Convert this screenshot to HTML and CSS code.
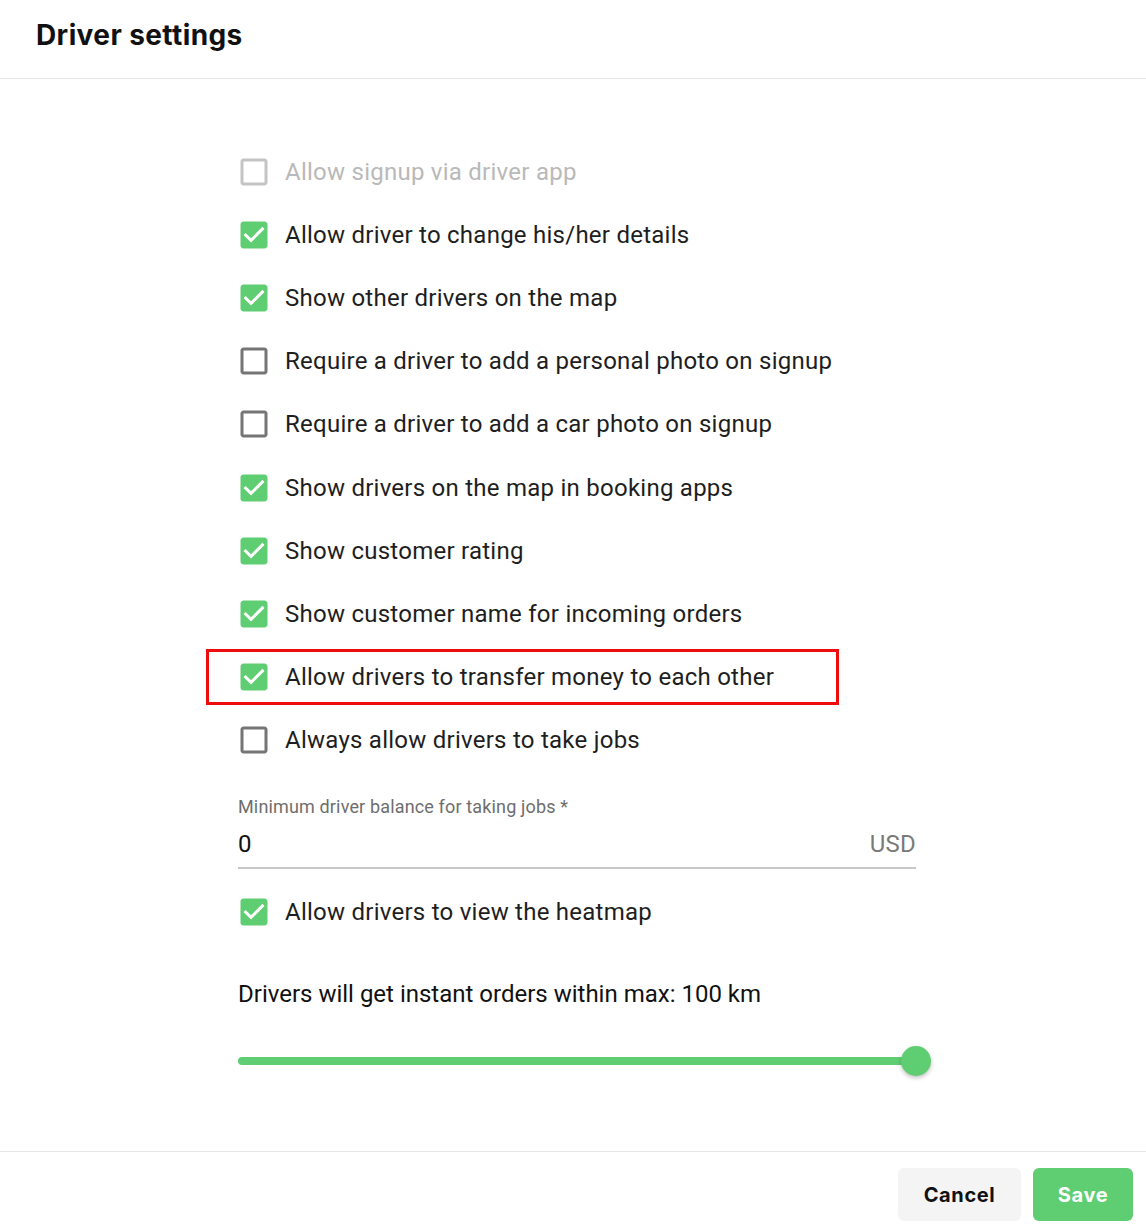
FILE: index.html
```html
<!DOCTYPE html>
<html>
<head>
<meta charset="utf-8">
<link rel="stylesheet" href="styles.css">
</head>
<body>
<div class="dialog">
  <header class="head"><h1 class="title">Driver settings</h1></header>
  <main class="body">
    <div class="col">
      <div class="row disabled"><svg class="cb" viewBox="0 0 24 24"><path d="M19 5v14H5V5h14m0-2H5c-1.1 0-2 .9-2 2v14c0 1.1.9 2 2 2h14c1.1 0 2-.9 2-2V5c0-1.1-.9-2-2-2z"/></svg><span>Allow signup via driver app</span></div>
      <div class="row"><svg class="cb on" viewBox="0 0 24 24"><path d="M19 3H5c-1.11 0-2 .9-2 2v14c0 1.1.89 2 2 2h14c1.11 0 2-.9 2-2V5c0-1.1-.89-2-2-2zm-9 14l-5-5 1.41-1.41L10 14.170l7.590-7.590L19 8l-9 9z"/></svg><span>Allow driver to change his/her details</span></div>
      <div class="row"><svg class="cb on" viewBox="0 0 24 24"><path d="M19 3H5c-1.11 0-2 .9-2 2v14c0 1.1.89 2 2 2h14c1.11 0 2-.9 2-2V5c0-1.1-.89-2-2-2zm-9 14l-5-5 1.41-1.41L10 14.17l7.59-7.59L19 8l-9 9z"/></svg><span>Show other drivers on the map</span></div>
      <div class="row"><svg class="cb" viewBox="0 0 24 24"><path d="M19 5v14H5V5h14m0-2H5c-1.1 0-2 .9-2 2v14c0 1.1.9 2 2 2h14c1.1 0 2-.9 2-2V5c0-1.1-.9-2-2-2z"/></svg><span>Require a driver to add a personal photo on signup</span></div>
      <div class="row"><svg class="cb" viewBox="0 0 24 24"><path d="M19 5v14H5V5h14m0-2H5c-1.1 0-2 .9-2 2v14c0 1.1.9 2 2 2h14c1.1 0 2-.9 2-2V5c0-1.1-.9-2-2-2z"/></svg><span>Require a driver to add a car photo on signup</span></div>
      <div class="row"><svg class="cb on" viewBox="0 0 24 24"><path d="M19 3H5c-1.11 0-2 .9-2 2v14c0 1.1.89 2 2 2h14c1.11 0 2-.9 2-2V5c0-1.1-.89-2-2-2zm-9 14l-5-5 1.41-1.41L10 14.17l7.59-7.59L19 8l-9 9z"/></svg><span>Show drivers on the map in booking apps</span></div>
      <div class="row"><svg class="cb on" viewBox="0 0 24 24"><path d="M19 3H5c-1.11 0-2 .9-2 2v14c0 1.1.89 2 2 2h14c1.11 0 2-.9 2-2V5c0-1.1-.89-2-2-2zm-9 14l-5-5 1.41-1.41L10 14.17l7.59-7.59L19 8l-9 9z"/></svg><span>Show customer rating</span></div>
      <div class="row"><svg class="cb on" viewBox="0 0 24 24"><path d="M19 3H5c-1.11 0-2 .9-2 2v14c0 1.1.89 2 2 2h14c1.11 0 2-.9 2-2V5c0-1.1-.89-2-2-2zm-9 14l-5-5 1.41-1.41L10 14.17l7.59-7.59L19 8l-9 9z"/></svg><span>Show customer name for incoming orders</span></div>
      <div class="row marked"><svg class="cb on" viewBox="0 0 24 24"><path d="M19 3H5c-1.11 0-2 .9-2 2v14c0 1.1.89 2 2 2h14c1.11 0 2-.9 2-2V5c0-1.1-.89-2-2-2zm-9 14l-5-5 1.41-1.41L10 14.17l7.59-7.59L19 8l-9 9z"/></svg><span>Allow drivers to transfer money to each other</span><div class="mark"></div></div>
      <div class="row"><svg class="cb" viewBox="0 0 24 24"><path d="M19 5v14H5V5h14m0-2H5c-1.1 0-2 .9-2 2v14c0 1.1.9 2 2 2h14c1.1 0 2-.9 2-2V5c0-1.1-.9-2-2-2z"/></svg><span>Always allow drivers to take jobs</span></div>

      <div class="field">
        <label class="flabel">Minimum driver balance for taking jobs *</label>
        <div class="finput"><span class="fval">0</span><span class="fadorn">USD</span></div>
      </div>

      <div class="row"><svg class="cb on" viewBox="0 0 24 24"><path d="M19 3H5c-1.11 0-2 .9-2 2v14c0 1.1.89 2 2 2h14c1.11 0 2-.9 2-2V5c0-1.1-.89-2-2-2zm-9 14l-5-5 1.41-1.41L10 14.17l7.59-7.59L19 8l-9 9z"/></svg><span>Allow drivers to view the heatmap</span></div>

      <div class="range">Drivers will get instant orders within max: 100 km</div>
      <div class="slider"><div class="track"></div><div class="thumb"></div></div>
    </div>
  </main>
  <footer class="foot">
    <button class="btn cancel">Cancel</button>
    <button class="btn save">Save</button>
  </footer>
</div>
</body>
</html>
```
FILE: styles.css
```css
html, body { margin: 0; padding: 0; background: #fff; }
body { font-family: Roboto, "Liberation Sans", sans-serif; color: #1a1a1a; width: 1146px; height: 1232px; overflow: hidden; }
.dialog { display: flex; flex-direction: column; height: 1232px; }
.head { height: 78px; border-bottom: 1px solid #e6e6e6; display: flex; align-items: center; padding-left: 36px; box-sizing: content-box; }
.title { margin: 0; font-family: Inter, "Noto Sans", sans-serif; font-weight: 700; font-size: 28px; color: #111; letter-spacing: 0.4px; margin-top: -8px; }
.body { flex: 1; padding-top: 61px; }
.col { width: 678px; margin-left: 238px; display: flex; flex-direction: column; }
.row { position: relative; height: 63.2px; display: flex; align-items: center; font-size: 24px; letter-spacing: 0.25px; color: #1e1e1e; }
.row span { margin-left: 13px; }
.cb { width: 36px; height: 36px; margin-left: -2px; fill: #757575; flex: none; }
.cb.on { fill: #5fce72; }
.row.disabled { color: #b9b9b9; }
.row.disabled .cb { fill: #c4c4c4; }
.mark { position: absolute; left: -32px; top: 3px; width: 633px; height: 56px; border: 3px solid #ee0c0c; box-sizing: border-box; }
.field { margin-top: 24px; margin-bottom: 12px; }
.flabel { display: block; font-size: 18px; letter-spacing: 0.15px; color: #6e6e6e; line-height: 22px; }
.finput { display: flex; justify-content: space-between; align-items: center; height: 42px; padding-bottom: 3px; box-sizing: border-box; height: 44px; margin-top: 7px; border-bottom: 2px solid #c8c8c8; font-size: 24px; letter-spacing: 0.2px; }
.fval { color: #111; }
.fadorn { color: #7a7a7a; }
.range { margin-top: 36px; font-size: 24px; letter-spacing: 0; color: #111; }
.slider { position: relative; height: 30px; margin-top: 38px; }
.track { position: absolute; left: 0; right: 0; top: 11px; height: 8px; border-radius: 4px; background: #5fce72; }
.thumb { position: absolute; right: -15px; top: 0; width: 30px; height: 30px; border-radius: 50%; background: #5fce72; box-shadow: 0 2px 4px rgba(0,0,0,0.25); }
.foot { height: 81px; border-top: 1px solid #e6e6e6; display: flex; justify-content: flex-end; align-items: flex-start; gap: 12px; padding: 16px 13px 0 0; box-sizing: border-box; }
.btn { height: 53px; border: none; border-radius: 6px; font-family: Inter, "Noto Sans", sans-serif; font-weight: 700; font-size: 20px; letter-spacing: 0.6px; cursor: pointer; }
.cancel { width: 123px; background: #f4f4f4; color: #111; }
.save { width: 100px; background: #5fce72; color: #fff; }
```
